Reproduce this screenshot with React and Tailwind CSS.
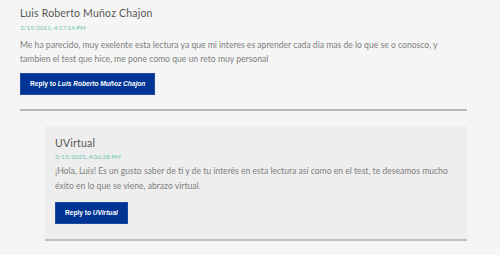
export default function App() {
  const muli = { fontFamily: '"Lato", "Noto Sans", sans-serif' };
  const arial = { fontFamily: '"Liberation Sans", Arial, sans-serif' };
  return (
    <div className="w-[500px] h-[255px] bg-[#f5f5f5] overflow-hidden" style={muli}>
      <div className="ml-[20px] w-[447px] pt-[4px]">
        <div className="text-[10.5px] leading-[18px] text-[#555] tracking-[0.2px]">Luis Roberto Muñoz Chajon</div>
        <div className="mt-[1px] text-[6.2px] leading-[10px] text-[#6cc4b4]">3/15/2021, 4:17:14 PM</div>
        <p className="mt-[5px] text-[8.6px] leading-[14px] text-[#808080]">
          Me ha parecido, muy exelente esta lectura ya que mi interes es aprender cada dia mas de lo que se o conosco, y tambien el test que hice, me pone como que un reto muy personal
        </p>
        <button className="mt-[7px] h-[22px] px-[9px] bg-[#003595] border border-[#1c4aa3] text-white text-[6.6px] font-bold" style={arial}>
          Reply to <em>Luis Roberto Muñoz Chajon</em>
        </button>
        <div className="mt-[14px] h-[2px] bg-[#b8b8b8]" />
        <div className="mt-[15px] ml-[25px] bg-[#eeeeee] border-b-2 border-[#c0c0c0] pl-[10px] pr-[8px] pt-[8px] pb-[15px]">
          <div className="text-[10.5px] leading-[18px] text-[#555] tracking-[0.2px]">UVirtual</div>
          <div className="text-[6.2px] leading-[10px] text-[#6cc4b4]">3/15/2021, 4:36:28 PM</div>
          <p className="mt-[2px] text-[8.6px] leading-[15px] text-[#808080]">
            ¡Hola, Luis! Es un gusto saber de ti y de tu interés en esta lectura así como en el test, te deseamos mucho éxito en lo que se viene, abrazo virtual.
          </p>
          <button className="mt-[8px] h-[22px] px-[9px] bg-[#003595] border border-[#1c4aa3] text-white text-[6.6px] font-bold" style={arial}>
            Reply to <em>UVirtual</em>
          </button>
        </div>
      </div>
    </div>
  );
}
